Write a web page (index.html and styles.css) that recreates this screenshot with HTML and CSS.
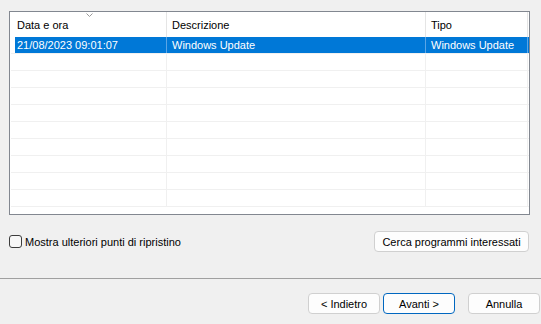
FILE: index.html
```html
<!DOCTYPE html>
<html lang="it">
<head>
    <meta charset="UTF-8">
    <title>Ripristino configurazione di sistema</title>
    <link rel="stylesheet" href="styles.css">
</head>
<body>
    <div class="listview">
        <div class="lv-row lv-header">
            <div class="cell c1">Data e ora<svg class="sort" width="7" height="4" viewBox="0 0 7 4"><polyline points="0.5,0.5 3.5,3.5 6.5,0.5" fill="none" stroke="#9a9a9a" stroke-width="1"/></svg></div>
            <div class="cell c2">Descrizione</div>
            <div class="cell c3">Tipo</div>
        </div>
        <div class="lv-row selected">
            <div class="cell c1">21/08/2023 09:01:07</div>
            <div class="cell c2">Windows Update</div>
            <div class="cell c3">Windows Update</div>
        </div>
        <div class="lv-row"><div class="cell c1"></div><div class="cell c2"></div><div class="cell c3"></div></div>
        <div class="lv-row"><div class="cell c1"></div><div class="cell c2"></div><div class="cell c3"></div></div>
        <div class="lv-row"><div class="cell c1"></div><div class="cell c2"></div><div class="cell c3"></div></div>
        <div class="lv-row"><div class="cell c1"></div><div class="cell c2"></div><div class="cell c3"></div></div>
        <div class="lv-row"><div class="cell c1"></div><div class="cell c2"></div><div class="cell c3"></div></div>
        <div class="lv-row"><div class="cell c1"></div><div class="cell c2"></div><div class="cell c3"></div></div>
        <div class="lv-row"><div class="cell c1"></div><div class="cell c2"></div><div class="cell c3"></div></div>
        <div class="lv-row"><div class="cell c1"></div><div class="cell c2"></div><div class="cell c3"></div></div>
        <div class="lv-row"><div class="cell c1"></div><div class="cell c2"></div><div class="cell c3"></div></div>
    </div>

    <div class="options">
        <label class="check"><span class="box"></span>Mostra ulteriori punti di ripristino</label>
        <button class="btn btn-wide">Cerca programmi interessati</button>
    </div>

    <div class="separator"></div>

    <div class="footer">
        <button class="btn">&lt; Indietro</button>
        <button class="btn btn-default">Avanti &gt;</button>
        <button class="btn btn-cancel">Annulla</button>
    </div>
</body>
</html>
```

FILE: styles.css
```css
body {
    margin: 0;
    background: #f0f0f0;
    font-family: "Liberation Sans", Arial, sans-serif;
    font-size: 11px;
    color: #000;
}

.listview {
    margin: 11px 11px 0 9px;
    height: 204px;
    box-sizing: border-box;
    border: 1px solid #828790;
    background: #fff;
    overflow: hidden;
}

.lv-row {
    display: flex;
    margin-left: 1px;
    height: 17px;
    box-sizing: border-box;
    border-bottom: 1px solid #f0f0f0;
}

.lv-header {
    height: 25px;
    border-bottom: none;
}

.cell {
    box-sizing: border-box;
    border-right: 1px solid #f0f0f0;
    padding-left: 5px;
    display: flex;
    align-items: center;
    white-space: nowrap;
}

.lv-header .cell {
    border-right-color: #e5e5e5;
    position: relative;
}

.c1 { width: 156px; padding-left: 6px; }
.c2 { width: 259px; }
.c3 { width: 102px; }

.sort {
    position: absolute;
    top: 1px;
    left: 75px;
}

.selected {
    background: linear-gradient(to right, transparent 4px, #0078d7 4px);
    color: #fff;
}

.selected .cell {
    border-right-color: #5aa5e6;
}

.options {
    display: flex;
    justify-content: space-between;
    align-items: center;
    margin: 16px 12px 0 9px;
}

.check {
    display: flex;
    align-items: center;
    gap: 3px;
}

.box {
    width: 13px;
    height: 13px;
    box-sizing: border-box;
    border: 1px solid #3c3c3c;
    border-radius: 3px;
    background: #f7f7f7;
}

.btn {
    font-family: "Liberation Sans", Arial, sans-serif;
    font-size: 11px;
    color: #000;
    width: 72px;
    height: 21px;
    padding: 0;
    background: #fdfdfd;
    border: 1px solid #d0d0d0;
    border-radius: 4px;
}

.btn-wide {
    width: 155px;
}

.btn-default {
    border-color: #0067c0;
}

.separator {
    margin-top: 26px;
    height: 1px;
    background: #a0a0a0;
}

.footer {
    display: flex;
    justify-content: flex-end;
    gap: 3px;
    padding: 14px 1px 0 0;
}

.btn-cancel {
    margin-left: 10px;
}
```
